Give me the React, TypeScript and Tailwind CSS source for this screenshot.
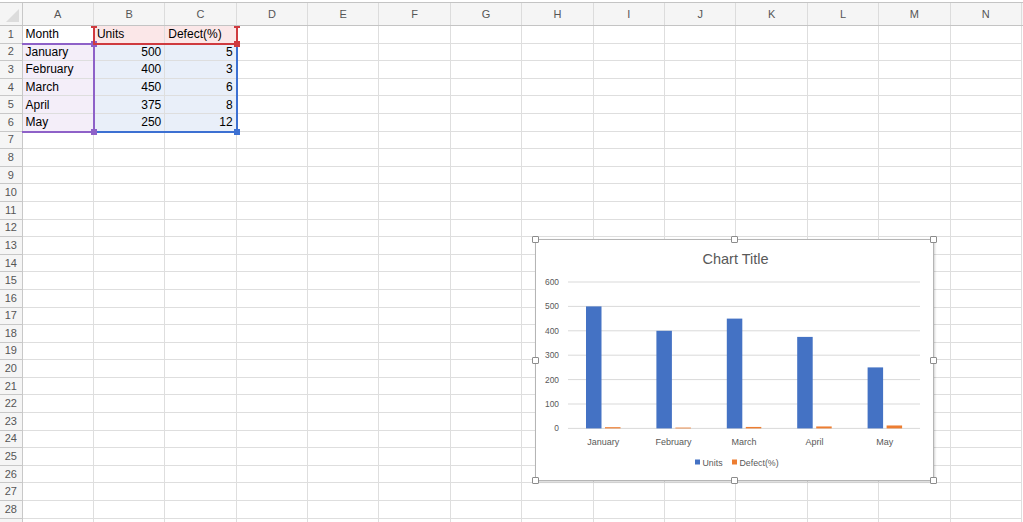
import React from "react";

const COLS = ["A", "B", "C", "D", "E", "F", "G", "H", "I", "J", "K", "L", "M", "N"];
const ROWS = Array.from({ length: 29 }, (_, i) => i + 1);

const data: Record<number, [string, string, string]> = {
  1: ["Month", "Units", "Defect(%)"],
  2: ["January", "500", "5"],
  3: ["February", "400", "3"],
  4: ["March", "450", "6"],
  5: ["April", "375", "8"],
  6: ["May", "250", "12"],
};

const chartData = [
  { m: "January", u: 500, d: 5 },
  { m: "February", u: 400, d: 3 },
  { m: "March", u: 450, d: 6 },
  { m: "April", u: 375, d: 8 },
  { m: "May", u: 250, d: 12 },
];

function cellBg(r: number, c: number) {
  if (r === 1 && (c === 1 || c === 2)) return "bg-[#fbe7e8]";
  if (r >= 2 && r <= 6 && c === 0) return "bg-[#f4eef9]";
  if (r >= 2 && r <= 6 && (c === 1 || c === 2)) return "bg-[#e9eff9]";
  return "bg-white";
}

function Chart() {
  const x0 = 32;
  const cw = 70.4;
  const base = 188.4;
  const k = 0.244;
  const grid = [600, 500, 400, 300, 200, 100, 0];
  return (
    <svg width="397" height="240" viewBox="0 0 397 240" style={{ fontFamily: "'Liberation Sans', Arial, sans-serif" }}>
      <text x="199.5" y="24" textAnchor="middle" fontSize="14.5" fill="#595959">Chart Title</text>
      {grid.map((g, i) => {
        const y = 42 + i * 24.4;
        return (
          <g key={g}>
            <line x1={x0} x2={384} y1={y} y2={y} stroke="#d9d9d9" strokeWidth="1" />
            <text x="23" y={y + 3} textAnchor="end" fontSize="8.4" fill="#595959">{g}</text>
          </g>
        );
      })}
      {chartData.map((d, i) => {
        const cx = x0 + i * cw;
        const hu = d.u * k;
        const hd = Math.max(d.d * k, 0.8);
        return (
          <g key={d.m}>
            <rect x={cx + 18} y={base - hu} width="15.5" height={hu} fill="#4472c4" />
            <rect x={cx + 37} y={base - hd} width="15.5" height={hd} fill="#ed7d31" />
            <text x={cx + cw / 2} y="205" textAnchor="middle" fontSize="9" fill="#595959">{d.m}</text>
          </g>
        );
      })}
      <rect x="159" y="219.5" width="5" height="5" fill="#4472c4" />
      <text x="166.5" y="225.5" fontSize="8.8" fill="#595959">Units</text>
      <rect x="196" y="219.5" width="5" height="5" fill="#ed7d31" />
      <text x="203.5" y="225.5" fontSize="8.8" fill="#595959">Defect(%)</text>
    </svg>
  );
}

const handle = "absolute w-[7px] h-[7px] bg-white border border-[#8c8c8c] rounded-[1px]";

export default function App() {
  return (
    <div
      className="relative w-[1023px] h-[522px] overflow-hidden bg-white"
      style={{ fontFamily: "'Liberation Sans', Arial, sans-serif" }}
    >
      <div className="h-[2px] bg-white" />
      {/* column header */}
      <div className="grid grid-cols-[22.5px_repeat(14,71.4px)] h-[24px] border-t border-b border-[#c4c4c4] bg-[#f5f5f5]">
        <div className="flex items-end justify-end p-[3px] border-r border-[#c8c8c8]">
          <div className="w-0 h-0 border-l-[13px] border-l-transparent border-b-[13px] border-b-[#dcdcdc]" />
        </div>
        {COLS.map((c) => (
          <div key={c} className="flex items-center justify-center border-r border-[#dcdcdc] text-[11px] text-[#555]">
            {c}
          </div>
        ))}
      </div>
      {/* rows */}
      {ROWS.map((r) => (
        <div key={r} className="grid grid-cols-[22.5px_repeat(14,71.4px)] h-[17.6px]">
          <div className="flex items-center justify-center bg-[#f5f5f5] border-r border-b border-[#c8c8c8] text-[11px] text-[#555] leading-none">
            {r <= 28 ? r : ""}
          </div>
          {COLS.map((c, ci) => {
            const v = data[r]?.[ci];
            const right = r >= 2 && ci > 0;
            return (
              <div
                key={c}
                className={`flex items-center px-[3px] border-r border-b border-[#dedede] text-[12px] text-black leading-none overflow-hidden whitespace-nowrap ${cellBg(r, ci)} ${right ? "justify-end" : "justify-start"}`}
              >
                {v ?? ""}
              </div>
            );
          })}
        </div>
      ))}

      {/* range highlights (overlay on the sheet) */}
      <div className="absolute left-[93px] top-[42.6px] w-[145px] h-[90px] border-r-2 border-b-2 border-[#3c70d2]">
        <div className="absolute -right-[4px] -bottom-[4px] w-[6px] h-[6px] bg-[#3c70d2]" />
      </div>
      <div className="absolute left-[22px] top-[42.6px] w-[73px] h-[90px] border-t-2 border-r-2 border-b-2 border-[#8e61c8]">
        <div className="absolute -right-[4px] -top-[4px] w-[6px] h-[6px] bg-[#8e61c8]" />
        <div className="absolute -right-[4px] -bottom-[4px] w-[6px] h-[6px] bg-[#8e61c8]" />
      </div>
      <div className="absolute left-[93px] top-[26.5px] w-[145px] h-[18px] border-l-2 border-r-2 border-b-2 border-[#cf3a3f]">
        <div className="absolute -left-[4px] -top-[1px] w-[6px] h-[2px] bg-[#cf3a3f]" />
        <div className="absolute -right-[4px] -top-[1px] w-[6px] h-[2px] bg-[#cf3a3f]" />
        <div className="absolute -right-[4px] -bottom-[4px] w-[6px] h-[6px] bg-[#cf3a3f]" />
      </div>

      {/* chart object floating over the sheet */}
      <div className="absolute left-[535px] top-[239px] w-[399px] h-[242px] bg-white border border-[#b5b5b5] shadow-[1px_1px_2px_rgba(0,0,0,0.18)]">
        <Chart />
        <div className={`${handle} -left-[4px] -top-[4px]`} />
        <div className={`${handle} left-[195px] -top-[4px]`} />
        <div className={`${handle} -right-[4px] -top-[4px]`} />
        <div className={`${handle} -left-[4px] top-[117px]`} />
        <div className={`${handle} -right-[4px] top-[117px]`} />
        <div className={`${handle} -left-[4px] -bottom-[4px]`} />
        <div className={`${handle} left-[195px] -bottom-[4px]`} />
        <div className={`${handle} -right-[4px] -bottom-[4px]`} />
      </div>
    </div>
  );
}
